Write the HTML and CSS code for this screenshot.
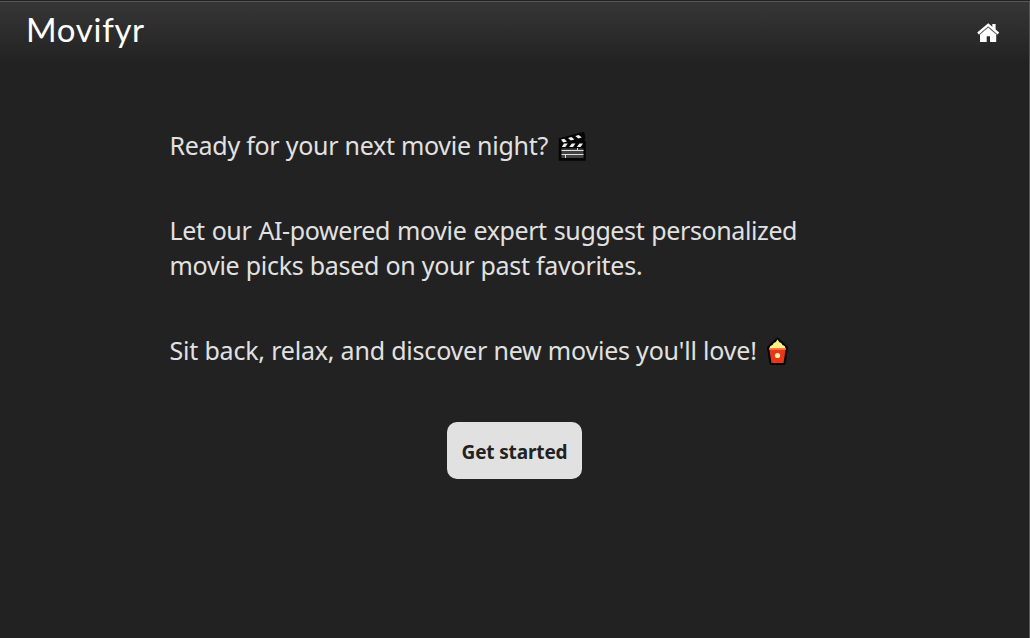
FILE: index.html
```html
<!DOCTYPE html>
<html lang="en">
<head>
<meta charset="utf-8">
<title>Movifyr</title>
<link rel="stylesheet" href="styles.css">
</head>
<body>
<div class="page">
  <header class="header">
    <a class="logo">Movifyr</a>
    <a class="home" aria-label="Home">
      <svg width="23" height="20" viewBox="0 0 23 20" fill="#fff">
        <path d="M3 11.3 11.2 4.6 19.2 11.3V19H13V13.2H9.7V19H3Z"/>
        <path d="M15.3 1H18.6V7.3L15.3 4.6Z"/>
        <path d="M1 10.5 11.2 1.9 21.4 10.5" fill="none" stroke="#fff" stroke-width="2.4"/>
        <path d="M2.2 12 11.2 4.4 20.2 12" fill="none" stroke="#888" stroke-width=".7"/>
      </svg>
    </a>
  </header>
  <main class="intro">
    <p class="line"><span class="ready">Ready for your next movie night?</span>
      <svg class="emoji" width="30" height="30" viewBox="0 0 30 30">
        <path d="M1.5 7 25.5.7 26.7 5.5 25 9.5H27V28H1.5Z" fill="#050505" stroke="#050505" stroke-width="1.5" stroke-linejoin="round"/>
        <path d="M3.5 16.5H25.5V26H3.5Z" fill="#424242"/>
        <path d="M3 7.6 6.2 6.8 9 9.4 5.2 10.4ZM10 5.9 13.5 5 16.5 7.4 12.8 8.4ZM17.3 4 20.8 3.1 23.8 5.5 20.2 6.4ZM6 11.5H9.8L7.3 15H3.8ZM13.8 11.5H17.5L15 15H11.2ZM21.4 11.5H25L22.6 15H18.8Z" fill="#eee"/>
        <path d="M3.5 18.5H25.5M3.5 22.5H25.5M19.5 16V18.5M7.5 22.5V26" fill="none" stroke="#ddd"/>
      </svg>
    </p>
    <p class="line"><span class="suggest">Let our AI-powered movie expert suggest personalized</span><br><span class="picks">movie picks based on your past favorites.</span></p>
    <p class="line"><span class="relax">Sit back, relax, and discover new movies you'll love!</span>
      <svg class="emoji popcorn" width="24" height="30" viewBox="0 0 24 30">
        <path d="M11.5 2 20.5 10.5 18 26.5H5L2.5 10.5Z" fill="#050505" stroke="#050505" stroke-width="3" stroke-linejoin="round"/>
        <path d="M11.5 2.5 13.2 5 15.2 6 16.5 8 18.6 9 20 12H3L4.4 9 6.5 8 7.8 6 9.8 5Z" fill="#fff08a"/>
        <path d="M3.2 11.5H19.8L17.5 26H5.5Z" fill="#e8361c"/>
        <path d="M3.2 11.5H19.8L19.6 13H3.4Z" fill="#ff6a35"/>
        <circle cx="11.5" cy="18.5" r="2.6" fill="#fff0a0"/>
      </svg>
    </p>
    <button class="start">Get started</button>
  </main>
</div>
</body>
</html>
```
FILE: styles.css
```css
* { box-sizing: border-box; }
body { margin: 0; padding-top: 1px; background: #222; color: #e1e1e1; font-family: "Noto Sans", sans-serif; }
.page { height: 637px; border-top: 1px solid #555; border-right: 1px solid #555; display: flex; flex-direction: column; }
.header { height: 62px; padding: 0 29px 0 26px; display: flex; align-items: center; justify-content: space-between; background: linear-gradient(#363636, #222); }
.logo { margin-top: -9px; font: 400 33px/40px Lato, sans-serif; color: #fff; letter-spacing: .7px; }
.home { display: flex; margin-top: -1px; }
.intro { width: 690px; margin: 64px auto 0; display: flex; flex-direction: column; }
.line { margin: 0 0 50px; font-size: 25px; line-height: 35px; letter-spacing: -.27px; white-space: nowrap; }
.suggest { letter-spacing: -.4px; word-spacing: 1px; }
.relax { letter-spacing: -.2px; }
.emoji { margin: -5px 0 -5px 4px; vertical-align: -2px; }
.popcorn { margin-left: 3px; }
.start { align-self: center; width: 135px; height: 57px; margin-top: 4px; padding: 3px 0 0; border: 0; border-radius: 10px; background: #e1e1e1; color: #222; font: 700 19px/27px "Noto Sans", sans-serif; letter-spacing: -.15px; }
```
